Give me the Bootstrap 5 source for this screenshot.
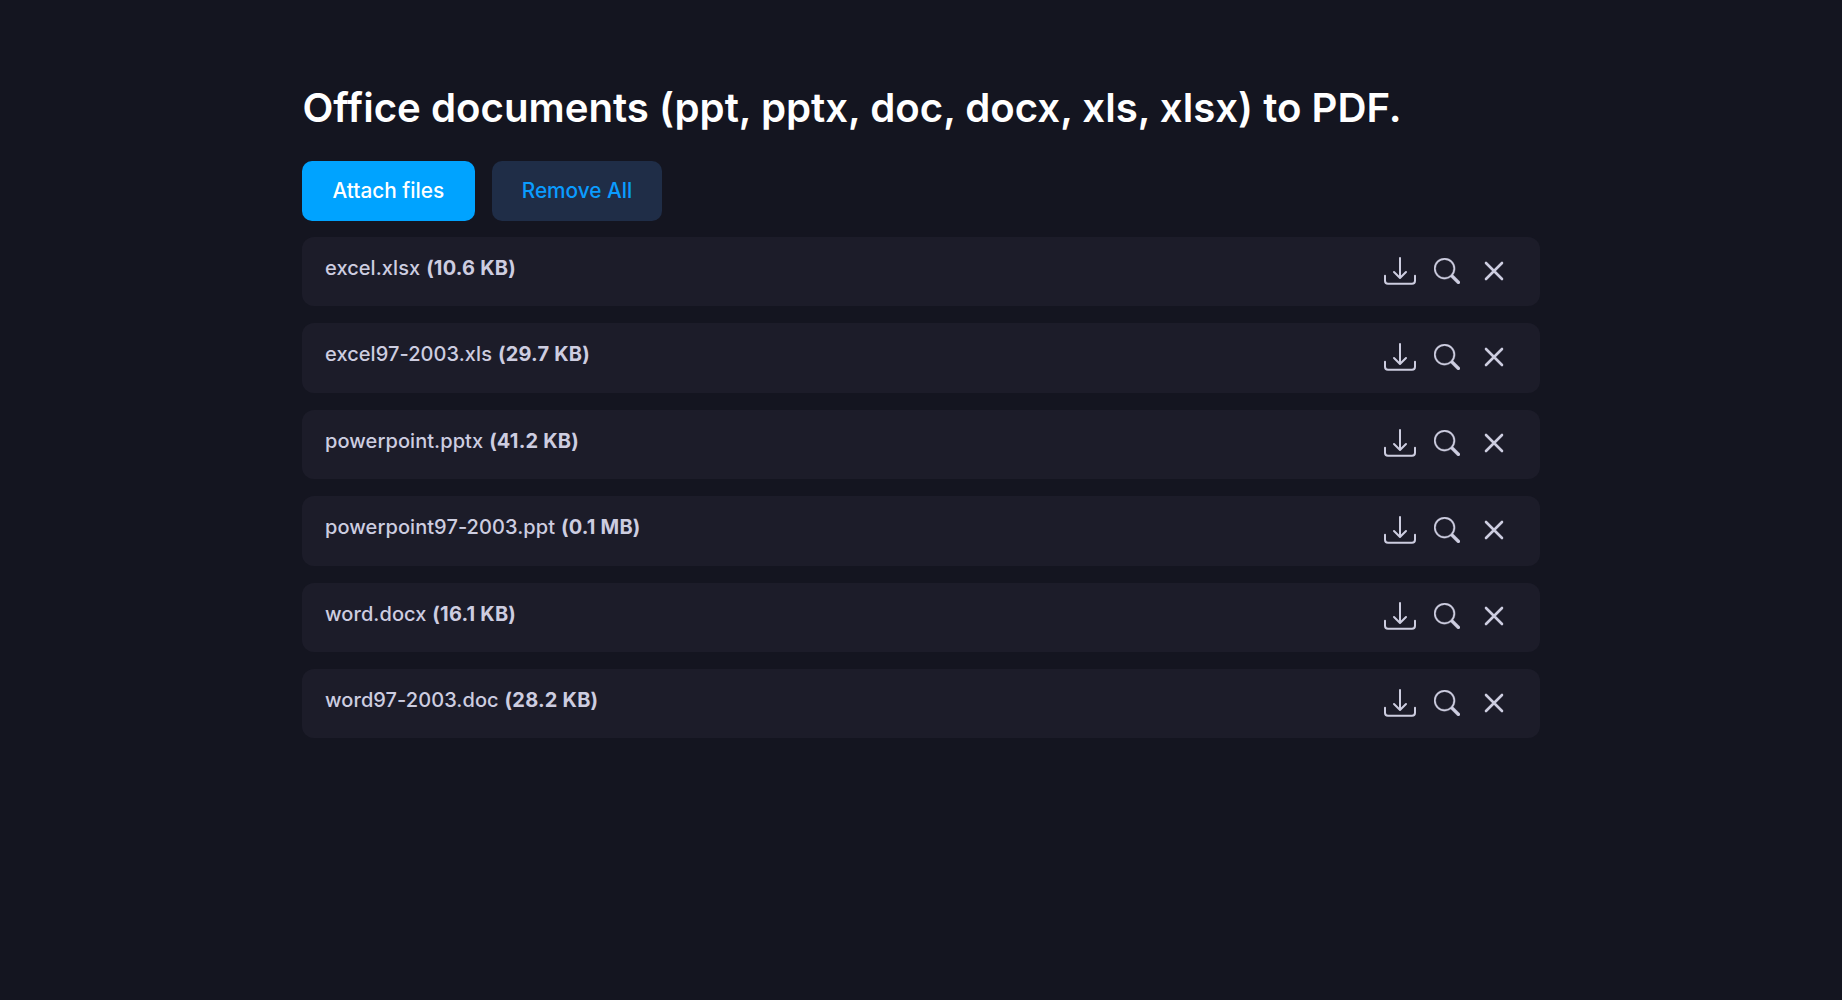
<!DOCTYPE html>
<html lang="en">
<head>
<meta charset="utf-8">
<title>Office documents to PDF</title>
<link href="https://cdn.jsdelivr.net/npm/bootstrap@5.3.0/dist/css/bootstrap.min.css" rel="stylesheet">
<style>
html, body { background: #141520; min-height: 100%; }
body { font-family: Inter, "Liberation Sans", sans-serif; color: #cdcde0; }
.page-wrap { width: 1238px; margin: 0 auto; padding-top: 80px; }
.page-title { font-size: 40.18px; font-weight: 600; line-height: 56px; color: #fff; margin: 0 0 25px 0.5px; }
.act-btn { font-size: 20.8px; font-weight: 500; line-height: 30px; padding: 15px 30px; border: 0; border-radius: 10px; }
.act-gap { gap: 17px; margin-bottom: 16px; }
.act-primary { background: #00a3ff; color: #fff; padding-inline: 30.5px; }
.act-soft { background: #1f2d47; color: #0a9cff; }
.file-list { gap: 17px; }
.file-row { background: #1c1c29; border-radius: 12px; height: 69.4px; padding: 0 23px; font-size: 20px; font-weight: 500; letter-spacing: .07px; line-height: 30px; }
.file-name { padding-top: 16px; align-self: flex-start; }
.file-name b { font-weight: 700; letter-spacing: .2px; margin-left: .5px; }
.file-icons { padding-bottom: 2px; }
.ico-cell { width: 47px; height: 32px; display: flex; align-items: center; justify-content: center; }
.ico-cell svg { display: block; fill: #cdcde0; }
.ico-heavy { stroke: #cdcde0; stroke-width: .2; }
</style>
</head>
<body>
<main class="page-wrap">
<h1 class="page-title">Office documents (ppt, pptx, doc, docx, xls, xlsx) to PDF.</h1>
<div class="d-flex act-gap">
<button class="btn act-btn act-primary" type="button">Attach files</button>
<button class="btn act-btn act-soft" type="button">Remove All</button>
</div>
<div class="file-list d-flex flex-column" id="files"></div>
</main>
<script>
const files = [["excel.xlsx","10.6 KB"],["excel97-2003.xls","29.7 KB"],["powerpoint.pptx","41.2 KB"],["powerpoint97-2003.ppt","0.1 MB"],["word.docx","16.1 KB"],["word97-2003.doc","28.2 KB"]];
const icons = `<div class="file-icons d-flex align-items-center"><span class="ico-cell"><svg width="32" height="32" viewBox="0 0 16 16"><path d="M.5 9.9a.5.5 0 0 1 .5.5v2.5a1 1 0 0 0 1 1h12a1 1 0 0 0 1-1v-2.5a.5.5 0 0 1 1 0v2.5a2 2 0 0 1-2 2H2a2 2 0 0 1-2-2v-2.5a.5.5 0 0 1 .5-.5z"/><path d="M7.646 11.854a.5.5 0 0 0 .708 0l3-3a.5.5 0 0 0-.708-.708L8.5 10.293V1.5a.5.5 0 0 0-1 0v8.793L5.354 8.146a.5.5 0 1 0-.708.708l3 3z"/></svg></span><span class="ico-cell"><svg class="ico-heavy" width="26" height="26" viewBox="0 0 16 16"><path d="M11.742 10.344a6.5 6.5 0 1 0-1.397 1.398h-.001c.03.04.062.078.098.115l3.85 3.85a1 1 0 0 0 1.415-1.414l-3.85-3.85a1.007 1.007 0 0 0-.115-.1zM12 6.5a5.5 5.5 0 1 1-11 0 5.5 5.5 0 0 1 11 0z"/></svg></span><span class="ico-cell"><svg width="24" height="24" viewBox="0 0 24 24"><path d="M4 4 20 20M20 4 4 20" fill="none" stroke="#cdcde0" stroke-width="2.6" stroke-linecap="round"/></svg></span></div>`;
document.getElementById('files').innerHTML = files.map(f => `<div class="file-row d-flex justify-content-between align-items-center"><div class="file-name">${f[0]} <b>(${f[1]})</b></div>${icons}</div>`).join('');
</script>
</body>
</html>
